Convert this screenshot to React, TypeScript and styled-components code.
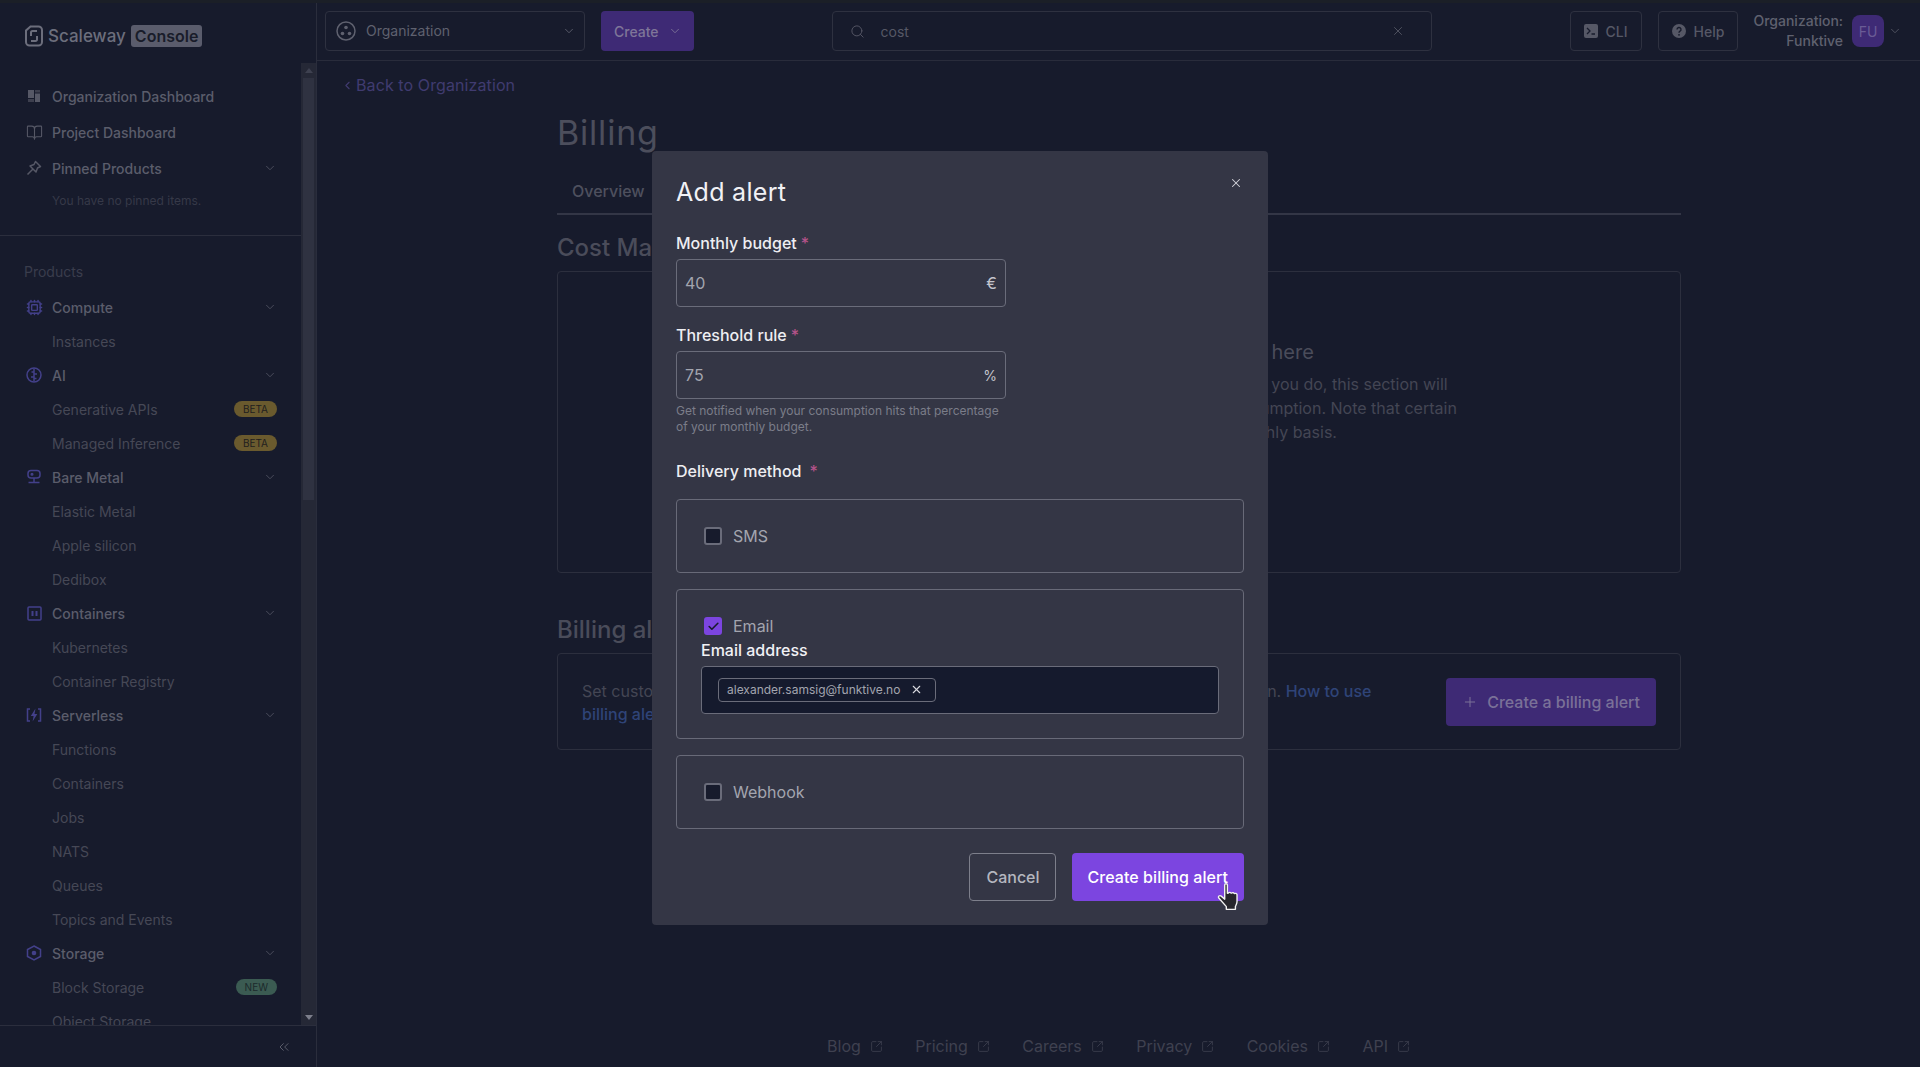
import React from 'react';
import styled, { createGlobalStyle } from 'styled-components';
import { BookOpen, Check, ChevronDown, ChevronLeft, ChevronsLeft, Cpu, Plus, Search, SquareArrowOutUpRight, X } from 'lucide-react';

const GlobalStyle = createGlobalStyle`
  html, body { margin: 0; padding: 0; background: #171b2c; }
  * { box-sizing: border-box; }
  body { font-family: Inter, "Liberation Sans", sans-serif; overflow: hidden; }
`;

const Shell = styled.div`
  display: grid;
  grid-template-columns: 317px 1fr;
  width: 1920px;
  height: 1067px;
  border-top: 3px solid #1b1f27;
  background: #171b2c;
  overflow: hidden;
`;

const Sidebar = styled.aside`
  display: flex;
  flex-direction: column;
  height: 1064px;
  border-right: 1px solid #2a2d3c;
`;

const Brand = styled.div`
  display: flex;
  align-items: center;
  height: 60px;
  padding: 5px 0 0 24px;
  flex: none;
`;

const BrandName = styled.span`
  margin-left: 4px;
  font-size: 17px;
  font-weight: 500;
  color: #6c6e7c;
`;

const BrandTag = styled.span`
  margin-left: 5px;
  padding: 0 4px;
  height: 22px;
  line-height: 22px;
  border-radius: 3px;
  background: #5a5c6c;
  color: #191c2a;
  font-size: 16px;
  font-weight: 600;
`;

const NavWrap = styled.div`
  display: flex;
  height: 962px;
  flex: none;
`;

const Nav = styled.nav`
  flex: 1;
  min-width: 0;
  padding-top: 15px;
  overflow: hidden;
`;

const TopRow = styled.div`
  display: flex;
  align-items: center;
  height: 36px;
  padding: 0 24px 0 24px;
  color: #5b5d6b;
  font-size: 14px;
  font-weight: 500;
`;

const NavIcon = styled.span<{ $tone?: string }>`
  display: flex;
  align-items: center;
  justify-content: center;
  width: 20px;
  height: 20px;
  margin-right: 8px;
  flex: none;
  color: ${p => p.$tone || '#565866'};
`;

const NavLabel = styled.span`
  flex: 1;
  white-space: nowrap;
`;

const EmptyNote = styled.div`
  height: 29px;
  padding: 1px 0 0 52px;
  line-height: 28px;
  font-size: 12px;
  color: #363948;
`;

const Divider = styled.hr`
  margin: 20px 0 18px;
  border: 0;
  border-top: 1px solid #2b2e3d;
`;

const SectionTitle = styled.div`
  height: 36px;
  padding-left: 24px;
  line-height: 36px;
  font-size: 14px;
  color: #3a3d4c;
`;

const GroupRow = styled(TopRow)`
  height: 34px;
`;

const SubRow = styled.div`
  display: flex;
  align-items: center;
  height: 34px;
  padding: 0 24px 0 52px;
  color: #464856;
  font-size: 14px;
`;

const Badge = styled.span<{ $kind: 'beta' | 'new' }>`
  height: 16px;
  padding: 0 9px;
  border-radius: 8px;
  line-height: 16px;
  font-size: 10px;
  background: ${p => (p.$kind === 'beta' ? '#6a5a2e' : '#3b5b52')};
  color: ${p => (p.$kind === 'beta' ? '#1f1e1e' : '#1c2a2c')};
`;

const Track = styled.div`
  display: flex;
  flex-direction: column;
  align-items: center;
  width: 15px;
  flex: none;
  background: #252836;
`;

const Arrow = styled.span<{ $down?: boolean }>`
  width: 0;
  height: 0;
  margin: 5px 0;
  border-left: 4px solid transparent;
  border-right: 4px solid transparent;
  ${p => (p.$down ? 'border-top: 5px solid #7c7e8b; margin-top: auto;' : 'border-bottom: 5px solid #3e4150;')}
`;

const Thumb = styled.div`
  width: 11px;
  height: 422px;
  background: #2f3241;
`;

const SideFooter = styled.div`
  display: flex;
  align-items: center;
  justify-content: flex-end;
  height: 42px;
  padding-right: 24px;
  border-top: 1px solid #2b2e3d;
  color: #5a5c6a;
`;

const Main = styled.main`
  display: flex;
  flex-direction: column;
  height: 1064px;
  min-width: 0;
`;

const TopBar = styled.header`
  display: flex;
  align-items: center;
  height: 58px;
  padding: 0 16px 1px 8px;
  border-bottom: 1px solid #292c3b;
  flex: none;
`;

const SelectBox = styled.div`
  display: flex;
  align-items: center;
  width: 260px;
  height: 40px;
  padding: 0 8px 0 10px;
  border: 1px solid #2e3140;
  border-radius: 4px;
  color: #5f616f;
  font-size: 14px;
`;

const SelectText = styled.span`
  flex: 1;
  margin: 0 0 2px 10px;
`;

const CreateButton = styled.div`
  display: flex;
  align-items: center;
  gap: 9px;
  height: 40px;
  margin-left: 16px;
  padding: 0 12px 0 13px;
  border-radius: 4px;
  background: #3e2a75;
  color: #7f7699;
  font-size: 14px;
  font-weight: 500;
`;

const SearchBox = styled.div`
  display: flex;
  align-items: center;
  width: 600px;
  height: 40px;
  margin-left: 138px;
  padding: 0 26px 0 17px;
  border: 1px solid #2e3140;
  border-radius: 4px;
  color: #565866;
  font-size: 14px;
`;

const SearchValue = styled.span`
  flex: 1;
  margin-left: 16px;
`;

const GhostButton = styled.div<{ $left: number }>`
  display: flex;
  align-items: center;
  gap: 8px;
  height: 40px;
  margin-left: ${p => p.$left}px;
  padding: 0 13px;
  border: 1px solid #2e3140;
  border-radius: 4px;
  color: #565866;
  font-size: 14px;
  font-weight: 500;
`;

const OrgName = styled.div`
  margin-left: 15px;
  line-height: 20px;
  text-align: right;
  color: #5f616f;
  font-size: 14px;
  font-weight: 500;
`;

const Avatar = styled.div`
  display: flex;
  align-items: center;
  justify-content: center;
  width: 32px;
  height: 32px;
  margin-left: 9px;
  border-radius: 8px;
  background: #3e2a75;
  color: #6a5c95;
  font-size: 14px;
`;

const OrgChevron = styled.span`
  display: flex;
  margin-left: 4px;
  color: #565866;
`;

const BackLink = styled.div`
  display: flex;
  align-items: center;
  gap: 2px;
  height: 24px;
  margin: 12px 0 0 24px;
  color: #403b70;
  font-size: 16px;
  letter-spacing: 0.1px;
`;

const Page = styled.div`
  width: 1124px;
  margin: 16px 0 0 240px;
`;

const PageTitle = styled.h1`
  margin: 0;
  font-size: 34px;
  line-height: 40px;
  font-weight: 400;
  letter-spacing: 0.8px;
  color: #4c4e5c;
`;

const Tabs = styled.div`
  display: flex;
  align-items: center;
  height: 43px;
  margin-top: 19px;
  padding: 0 15px 4px;
  border-bottom: 2px solid #333646;
  color: #4e505e;
  font-size: 16px;
  font-weight: 500;
`;

const SectionHeading = styled.h2<{ $gap: number }>`
  margin: ${p => p.$gap}px 0 0;
  font-size: 24px;
  line-height: 32px;
  font-weight: 500;
  color: #4a4c5a;
`;

const EmptyCard = styled.section`
  height: 302px;
  margin-top: 7px;
  padding: 66px 0 0 397px;
  border: 1px solid #2c2f3e;
  border-radius: 4px;
`;

const EmptyTitle = styled.div`
  font-size: 20px;
  line-height: 28px;
  font-weight: 400;
  color: #4a4c5a;
  margin-bottom: 6px;
`;

const EmptyLine = styled.div`
  font-size: 16px;
  line-height: 24px;
  white-space: nowrap;
  color: #444654;
`;

const AlertCard = styled.section`
  display: flex;
  align-items: center;
  justify-content: space-between;
  height: 97px;
  margin-top: 7px;
  padding: 0 24px;
  border: 1px solid #2c2f3e;
  border-radius: 4px;
`;

const AlertText = styled.p`
  margin: 2px 0 0;
  font-size: 16px;
  line-height: 23px;
  white-space: nowrap;
  color: #444654;
`;

const InlineLink = styled.span`
  color: #2f4478;
  font-weight: 500;
`;

const PrimaryDim = styled.div`
  display: flex;
  align-items: center;
  gap: 9px;
  height: 48px;
  padding: 0 16px;
  border-radius: 4px;
  background: #3e2a75;
  color: #7a7198;
  font-size: 16px;
  font-weight: 500;
`;

const FooterLinks = styled.footer`
  display: flex;
  align-items: center;
  justify-content: center;
  gap: 32.4px;
  height: 42px;
  margin-top: auto;
  color: #3f4150;
  font-size: 16px;
`;

const FooterLink = styled.span`
  display: flex;
  align-items: center;
  gap: 9px;
`;

const Overlay = styled.div`
  position: fixed;
  inset: 0;
  display: flex;
  justify-content: center;
  align-items: flex-start;
  padding-top: 151px;
`;

const Modal = styled.div`
  position: relative;
  width: 616px;
  height: 774px;
  padding: 24px;
  border-radius: 4px;
  background: #343645;
`;

const ModalTitle = styled.h2`
  margin: 0;
  font-size: 25px;
  line-height: 34px;
  font-weight: 400;
  letter-spacing: 0.3px;
  color: #f1f1f5;
`;

const CloseButton = styled.span`
  position: absolute;
  top: 25px;
  right: 25px;
  display: flex;
  color: #d3d4da;
`;

const Label = styled.div<{ $gap: number }>`
  margin-top: ${p => p.$gap}px;
  font-size: 16px;
  line-height: 24px;
  font-weight: 500;
  color: #eeeef2;
`;

const Star = styled.span<{ $gap?: number }>`
  margin-left: ${p => p.$gap ?? 4}px;
  color: #b4538a;
`;

const Field = styled.div`
  display: flex;
  align-items: center;
  justify-content: space-between;
  width: 330px;
  height: 48px;
  margin-top: 4px;
  padding: 0 8px;
  border: 1px solid #6a6c7a;
  border-radius: 4px;
  font-size: 16px;
  color: #a3a5af;
`;

const Unit = styled.span<{ $size?: number }>`
  font-size: ${p => p.$size ?? 16}px;
  color: #c3c4cc;
`;

const Help = styled.div`
  width: 330px;
  margin-top: 4px;
  font-size: 12px;
  line-height: 16px;
  color: #7b7d89;
`;

const Method = styled.div<{ $gap: number; $open?: boolean }>`
  height: ${p => (p.$open ? 150 : 74)}px;
  margin-top: ${p => p.$gap}px;
  padding: ${p => (p.$open ? '24px' : '0 24px')};
  ${p => !p.$open && 'display: flex; align-items: center;'}
  border: 1px solid #686a78;
  border-radius: 4px;
`;

const CheckRow = styled.div`
  display: flex;
  align-items: center;
  height: 24px;
  padding-left: 3px;
  gap: 11px;
  font-size: 16px;
  color: #a3a5af;
`;

const Box = styled.span<{ $on?: boolean }>`
  display: flex;
  align-items: center;
  justify-content: center;
  width: 18px;
  height: 18px;
  border-radius: 3px;
  border: 2px solid ${p => (p.$on ? '#7c45e0' : '#6a6c7a')};
  background: ${p => (p.$on ? '#7c45e0' : '#171b2c')};
  color: #171b2c;
`;

const EmailLabel = styled.div`
  font-size: 16px;
  line-height: 24px;
  font-weight: 500;
  color: #f1f1f5;
`;

const TagInput = styled.div`
  display: flex;
  align-items: center;
  height: 48px;
  margin-top: 4px;
  padding: 0 0 1px 16px;
  border: 1px solid #6a6c7a;
  border-radius: 4px;
  background: #151a2d;
`;

const Tag = styled.div`
  display: flex;
  align-items: center;
  justify-content: space-between;
  width: 218px;
  height: 24px;
  padding: 0 12px 0 8px;
  border: 1px solid #6a6c7a;
  border-radius: 4px;
  font-size: 12px;
  color: #a3a5af;
`;

const TagClose = styled.span`
  display: flex;
  color: #d8d9df;
`;

const Actions = styled.div`
  display: flex;
  justify-content: flex-end;
  gap: 16px;
  margin-top: 24px;
`;

const CancelButton = styled.div`
  display: flex;
  align-items: center;
  height: 48px;
  padding: 0 15px 0 16px;
  border: 1px solid #7d7f8b;
  border-radius: 4px;
  color: #b5b6bf;
  font-size: 16px;
  font-weight: 500;
`;

const SubmitButton = styled.div`
  display: flex;
  align-items: center;
  height: 48px;
  padding: 0 16px;
  border-radius: 4px;
  background: #7c45e0;
  color: #fff;
  font-size: 16px;
  font-weight: 500;
  letter-spacing: 0.05px;
  white-space: nowrap;
`;

const Pointer = styled.svg`
  position: fixed;
  left: 1215px;
  top: 882px;
`;

const purple = '#43408a';

const Logo = () => (
  <svg width="20" height="22" viewBox="0 0 19 22" fill="none" stroke="#6c6e7c" strokeWidth="2">
    <path d="M6 1.5h8a3.5 3.5 0 0 1 3.5 3.5v12a3.5 3.5 0 0 1-3.5 3.500H5A3.500 3.500 0 0 1 1.500 17V5.500z" />
    <path d="M12.500 6H8a1.500 1.500 0 0 0-1.500 1.500V11M6.500 16H11a1.500 1.500 0 0 0 1.500-1.500V11" />
  </svg>
);

const DashIcon = () => (
  <svg width="14" height="14" viewBox="0 0 14 14" fill="#565866">
    <rect x="1" y="1" width="6" height="8" />
    <rect x="1" y="10" width="6" height="3" opacity=".6" />
    <rect x="8" y="1" width="5" height="2.500" opacity=".6" />
    <rect x="8" y="4.500" width="5" height="8.500" />
  </svg>
);

const PinIcon = () => (
  <svg width="16" height="16" viewBox="0 0 16 16" fill="none" stroke="#565866" strokeWidth="1.500" strokeLinejoin="round">
    <path d="M9.500 1.500l5 5-3 1.500-1.500 4-6-6 4-1.500zM6.500 9.500L1.500 14.500" />
  </svg>
);

const BrainIcon = () => (
  <svg width="16" height="16" viewBox="0 0 16 16" fill="none" stroke={purple} strokeWidth="1.500">
    <circle cx="8" cy="8" r="7" />
    <path d="M8 1.500v13M8 5H5.500M8 10h-3M8 7h3M8 11.500h2.500" />
  </svg>
);

const MetalIcon = () => (
  <svg width="16" height="16" viewBox="0 0 16 16" fill="none" stroke={purple} strokeWidth="1.500">
    <rect x="2" y="1.500" width="12" height="7.500" rx="3" />
    <circle cx="6" cy="5.200" r=".8" fill={purple} />
    <path d="M8 9v4M2.500 13.500h11" />
  </svg>
);

const ContainerIcon = () => (
  <svg width="15" height="15" viewBox="0 0 15 15" fill="none" stroke={purple} strokeWidth="1.500">
    <rect x="1" y="1" width="13" height="13" rx="1" />
    <path d="M5.500 5v5M9.500 5v5" strokeWidth="2" />
  </svg>
);

const ServerlessIcon = () => (
  <svg width="16" height="16" viewBox="0 0 16 16" fill="none" stroke={purple} strokeWidth="1.500">
    <path d="M4 2H1.500v12H4M12 2h2.500v12H12" />
    <path d="M9.500 1.500L4.800 9h2.800l-1 5.500L11.300 7H8.500z" fill={purple} stroke="none" />
  </svg>
);

const StorageIcon = () => (
  <svg width="16" height="16" viewBox="0 0 16 16" fill="none" stroke={purple} strokeWidth="1.500">
    <path d="M8 1l6.500 3.500v7L8 15l-6.500-3.500v-7z" />
    <circle cx="8" cy="8" r="2.300" fill={purple} stroke="none" />
  </svg>
);

const OrgIcon = () => (
  <svg width="20" height="20" viewBox="0 0 20 20" fill="#5f616f">
    <circle cx="10" cy="10" r="9" fill="none" stroke="#5f616f" strokeWidth="1.500" />
    <circle cx="10" cy="6.500" r="1.800" />
    <circle cx="6.500" cy="12.500" r="1.800" />
    <circle cx="13.500" cy="12.500" r="1.800" />
  </svg>
);

const CliIcon = () => (
  <svg width="14" height="14" viewBox="0 0 14 14">
    <rect width="14" height="14" rx="2" fill="#565866" />
    <path d="M3 4l3 3-3 3M7.500 10H11" fill="none" stroke="#171b2c" strokeWidth="1.300" />
  </svg>
);

const HelpIcon = () => (
  <svg width="14" height="14" viewBox="0 0 14 14">
    <circle cx="7" cy="7" r="7" fill="#565866" />
    <path d="M5 5.500a2 2 0 1 1 3 1.700c-.7.400-1 .8-1 1.500" fill="none" stroke="#171b2c" strokeWidth="1.400" />
    <circle cx="7" cy="10.800" r=".9" fill="#171b2c" />
  </svg>
);

const chevron = <ChevronDown size={14} strokeWidth={1.500} color="#505261" />;

type Item = { name: string; badge?: 'beta' | 'new' };
type Group = { name: string; icon: React.ReactNode; items: Item[] };

const groups: Group[] = [
  { name: 'Compute', icon: <Cpu size={17} color={purple} strokeWidth={2} />, items: [{ name: 'Instances' }] },
  { name: 'AI', icon: <BrainIcon />, items: [{ name: 'Generative APIs', badge: 'beta' }, { name: 'Managed Inference', badge: 'beta' }] },
  { name: 'Bare Metal', icon: <MetalIcon />, items: [{ name: 'Elastic Metal' }, { name: 'Apple silicon' }, { name: 'Dedibox' }] },
  { name: 'Containers', icon: <ContainerIcon />, items: [{ name: 'Kubernetes' }, { name: 'Container Registry' }] },
  {
    name: 'Serverless',
    icon: <ServerlessIcon />,
    items: [{ name: 'Functions' }, { name: 'Containers' }, { name: 'Jobs' }, { name: 'NATS' }, { name: 'Queues' }, { name: 'Topics and Events' }],
  },
  { name: 'Storage', icon: <StorageIcon />, items: [{ name: 'Block Storage', badge: 'new' }, { name: 'Object Storage' }] },
];

const footerLinks = ['Blog', 'Pricing', 'Careers', 'Privacy', 'Cookies', 'API'];

export default function App() {
  return (
    <>
      <GlobalStyle />
      <Shell>
        <Sidebar>
          <Brand>
            <Logo />
            <BrandName>Scaleway</BrandName>
            <BrandTag>Console</BrandTag>
          </Brand>
          <NavWrap>
            <Nav>
              <TopRow>
                <NavIcon><DashIcon /></NavIcon>
                <NavLabel>Organization Dashboard</NavLabel>
              </TopRow>
              <TopRow>
                <NavIcon><BookOpen size={17} strokeWidth={1.500} /></NavIcon>
                <NavLabel>Project Dashboard</NavLabel>
              </TopRow>
              <TopRow>
                <NavIcon><PinIcon /></NavIcon>
                <NavLabel>Pinned Products</NavLabel>
                {chevron}
              </TopRow>
              <EmptyNote>You have no pinned items.</EmptyNote>
              <Divider />
              <SectionTitle>Products</SectionTitle>
              {groups.map(group => (
                <div key={group.name}>
                  <GroupRow>
                    <NavIcon>{group.icon}</NavIcon>
                    <NavLabel>{group.name}</NavLabel>
                    {chevron}
                  </GroupRow>
                  {group.items.map(item => (
                    <SubRow key={item.name}>
                      <NavLabel>{item.name}</NavLabel>
                      {item.badge && <Badge $kind={item.badge}>{item.badge.toUpperCase()}</Badge>}
                    </SubRow>
                  ))}
                </div>
              ))}
            </Nav>
            <Track>
              <Arrow />
              <Thumb />
              <Arrow $down />
            </Track>
          </NavWrap>
          <SideFooter>
            <ChevronsLeft size={16} strokeWidth={1.500} />
          </SideFooter>
        </Sidebar>

        <Main>
          <TopBar>
            <SelectBox>
              <OrgIcon />
              <SelectText>Organization</SelectText>
              <ChevronDown size={14} strokeWidth={1.500} />
            </SelectBox>
            <CreateButton>
              Create
              <ChevronDown size={14} strokeWidth={1.500} />
            </CreateButton>
            <SearchBox>
              <Search size={15} strokeWidth={1.500} />
              <SearchValue>cost</SearchValue>
              <X size={14} strokeWidth={1.500} />
            </SearchBox>
            <GhostButton $left={138}>
              <CliIcon />
              CLI
            </GhostButton>
            <GhostButton $left={16}>
              <HelpIcon />
              Help
            </GhostButton>
            <OrgName>
              Organization:
              <br />
              Funktive
            </OrgName>
            <Avatar>FU</Avatar>
            <OrgChevron>
              <ChevronDown size={14} strokeWidth={1.500} />
            </OrgChevron>
          </TopBar>

          <BackLink>
            <ChevronLeft size={13} strokeWidth={2} />
            Back to Organization
          </BackLink>

          <Page>
            <PageTitle>Billing</PageTitle>
            <Tabs>Overview</Tabs>
            <SectionHeading $gap={17}>Cost Manager</SectionHeading>
            <EmptyCard>
              <EmptyTitle>Your recent cost data will appear here</EmptyTitle>
              <EmptyLine>You have not used any product yet. Once you do, this section will</EmptyLine>
              <EmptyLine>show a detailed view of your entire consumption. Note that certain</EmptyLine>
              <EmptyLine>resources are only really billed on a monthly basis.</EmptyLine>
            </EmptyCard>
            <SectionHeading $gap={41}>Billing alerts</SectionHeading>
            <AlertCard>
              <AlertText>
                Set custom thresholds to be notified by email when you reach a certain limit of consumption. <InlineLink>How to use</InlineLink>
                <br />
                <InlineLink>billing alerts</InlineLink>
              </AlertText>
              <PrimaryDim>
                <Plus size={16} strokeWidth={1.500} />
                Create a billing alert
              </PrimaryDim>
            </AlertCard>
          </Page>

          <FooterLinks>
            {footerLinks.map(link => (
              <FooterLink key={link}>
                {link}
                <SquareArrowOutUpRight size={13} strokeWidth={1.500} />
              </FooterLink>
            ))}
          </FooterLinks>
        </Main>
      </Shell>

      <Overlay>
        <Modal>
          <ModalTitle>Add alert</ModalTitle>
          <CloseButton>
            <X size={14} strokeWidth={1.800} />
          </CloseButton>

          <Label $gap={22}>
            Monthly budget<Star>*</Star>
          </Label>
          <Field>
            40
            <Unit>€</Unit>
          </Field>

          <Label $gap={16}>
            Threshold rule<Star>*</Star>
          </Label>
          <Field>
            75
            <Unit $size={14}>%</Unit>
          </Field>
          <Help>Get notified when your consumption hits that percentage of your monthly budget.</Help>

          <Label $gap={24}>
            Delivery method<Star $gap={8}>*</Star>
          </Label>
          <Method $gap={16}>
            <CheckRow>
              <Box />
              SMS
            </CheckRow>
          </Method>
          <Method $gap={16} $open>
            <CheckRow>
              <Box $on>
                <Check size={13} strokeWidth={3} />
              </Box>
              Email
            </CheckRow>
            <EmailLabel>Email address</EmailLabel>
            <TagInput>
              <Tag>
                alexander.samsig@funktive.no
                <TagClose>
                  <X size={13} strokeWidth={2} />
                </TagClose>
              </Tag>
            </TagInput>
          </Method>
          <Method $gap={16}>
            <CheckRow>
              <Box />
              Webhook
            </CheckRow>
          </Method>

          <Actions>
            <CancelButton>Cancel</CancelButton>
            <SubmitButton>Create billing alert</SubmitButton>
          </Actions>
        </Modal>
      </Overlay>

      <Pointer width="28" height="30" viewBox="0 0 24 28">
        <path
          d="M8 2.500c0-1.200 2.500-1.200 2.500 0v8l1-.2c.3-.8 2-.8 2.300 0l.7.100c.4-.7 2-.6 2.200.2l.6.200c.6-.4 2-.2 2.200 1v6.500c0 2-1 3-1.500 4.500v2.700H9.500v-2.500L2.500 15c-1-1.500.8-3 2.200-1.800L8 16z"
          fill="#26262c"
          stroke="#f2f2f2"
          strokeWidth="1.300"
          strokeLinejoin="round"
        />
      </Pointer>
    </>
  );
}
